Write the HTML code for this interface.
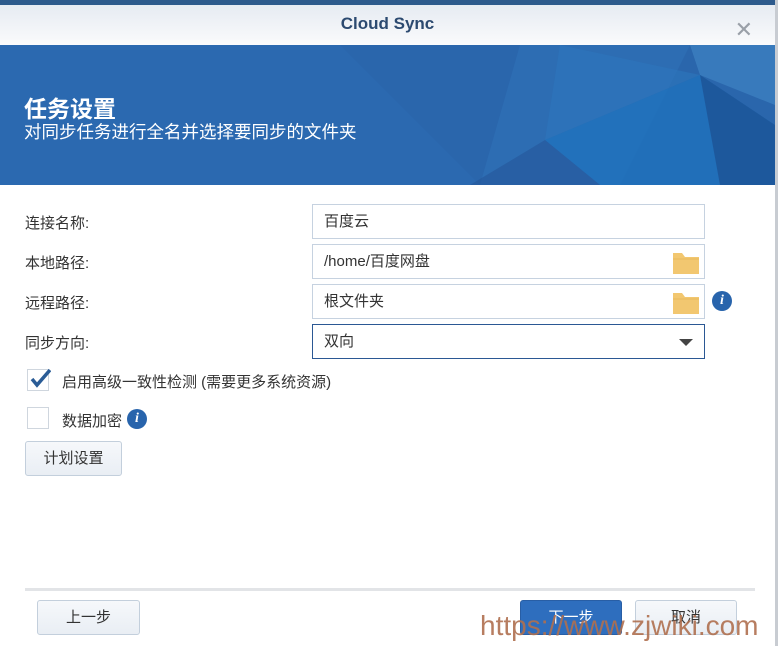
<!DOCTYPE html>
<html><head><meta charset="utf-8"><style>
*{margin:0;padding:0;box-sizing:border-box}
body{width:778px;height:646px;overflow:hidden;background:#fff;font-family:"Liberation Sans","Noto Sans CJK SC",sans-serif;position:relative;color:#333}
.topbar{position:absolute;left:0;top:0;width:778px;height:5px;background:#2d5a8c}
.right{position:absolute;left:775px;top:0;width:3px;height:646px;background:#c8ccd2}
.hdr{position:absolute;left:0;top:5px;width:775px;height:40px;background:linear-gradient(#e6ebf2,#fafbfc);text-align:center;font-size:17px;font-weight:bold;color:#2c4a70;line-height:38px}
.x{position:absolute;right:22px;top:6px;font-size:22px;color:#9aa0a8;font-weight:normal}
.ban{position:absolute;left:0;top:45px;width:775px;height:140px;background:#2b69b0;overflow:hidden}
.ban h1{position:absolute;left:24px;top:45px;font-size:23px;color:#fff;font-weight:bold}
.ban p{position:absolute;left:24px;top:74px;font-size:17.5px;color:#fff}
.lbl{position:absolute;left:25px;font-size:15px;color:#333}
.in{position:absolute;left:312px;width:393px;height:35px;border:1px solid #c6d2e0;font-size:15px;line-height:33px;padding-left:11px;color:#333}
.fold{position:absolute;right:4px;top:6px}
.info{position:absolute;width:20px;height:20px;border-radius:50%;background:#2864ac;color:#fff;font:italic bold 14px "Liberation Serif",serif;text-align:center;line-height:20px}
.cb{position:absolute;left:27px;width:22px;height:22px;border:1px solid #cfd6de;background:#fff}
.btn{position:absolute;height:35px;border:1px solid #c3cfdc;border-radius:3px;background:linear-gradient(#f6f8fb,#e9eef4);font-size:15px;text-align:center;line-height:33px;color:#333}
</style></head><body>
<div class="topbar"></div>
<div class="hdr">Cloud Sync<span class="x">✕</span></div>
<div class="ban">
<svg width="775" height="140" style="position:absolute;left:0;top:0">
<polygon points="340,0 775,0 775,140 480,140" fill="#2a66ac"/>
<polygon points="520,0 690,0 620,140 480,140" fill="#2f70b6" opacity=".7"/>
<polygon points="560,0 700,30 545,95" fill="#2d76bd" opacity=".6"/>
<polygon points="545,95 700,30 775,80 775,140 600,140" fill="#1f72bd" opacity=".8"/>
<polygon points="690,0 775,0 775,60 700,30" fill="#3c80c0" opacity=".8"/>
<polygon points="700,30 775,80 775,140 720,140" fill="#1c4f90" opacity=".7"/>
<polygon points="545,95 600,140 470,140" fill="#24579a" opacity=".6"/>
</svg>
<h1>任务设置</h1><p>对同步任务进行全名并选择要同步的文件夹</p></div>
<div class="lbl" style="top:212px">连接名称:</div>
<div class="lbl" style="top:252px">本地路径:</div>
<div class="lbl" style="top:292px">远程路径:</div>
<div class="lbl" style="top:332px">同步方向:</div>
<div class="in" style="top:204px">百度云</div>
<div class="in" style="top:244px">/home/百度网盘<svg class="fold" width="28" height="24"><path d="M1 2h9l3 4h14v17H1z" fill="#f2c770"/><path d="M1 8h26" stroke="#e8b95c"/></svg></div>
<div class="in" style="top:284px">根文件夹<svg class="fold" width="28" height="24"><path d="M1 2h9l3 4h14v17H1z" fill="#f2c770"/><path d="M1 8h26" stroke="#e8b95c"/></svg></div>
<div class="info" style="left:712px;top:291px">i</div>
<div class="in" style="top:324px;border-color:#2b5894">双向<svg style="position:absolute;right:11px;top:14px" width="14" height="8"><path d="M0 0h14L7 7z" fill="#444"/></svg></div>
<div class="cb" style="top:369px"><svg width="22" height="22" style="position:absolute;left:1px;top:-3px"><path d="M3 12l5 6L21 3" stroke="#2a5c96" stroke-width="3.5" fill="none"/></svg></div>
<div class="lbl" style="left:62px;top:371px">启用高级一致性检测 (需要更多系统资源)</div>
<div class="cb" style="top:407px"></div>
<div class="lbl" style="left:62px;top:410px">数据加密</div>
<div class="info" style="left:127px;top:409px">i</div>
<div class="btn" style="left:25px;top:441px;width:97px">计划设置</div>
<div style="position:absolute;left:25px;top:588px;width:730px;height:3px;background:#e2e4e7"></div>
<div class="btn" style="left:37px;top:600px;width:103px">上一步</div>
<div class="btn" style="left:520px;top:600px;width:102px;background:#2e6ebe;border-color:#285ea5;color:#fff">下一步</div>
<div class="btn" style="left:635px;top:600px;width:102px">取消</div>
<div style="position:absolute;left:480px;top:610px;font-size:28px;color:#b0704f;font-family:'Liberation Sans',sans-serif;opacity:.9">https://www.zjwiki.com</div>
<div class="right"></div>
</body></html>
